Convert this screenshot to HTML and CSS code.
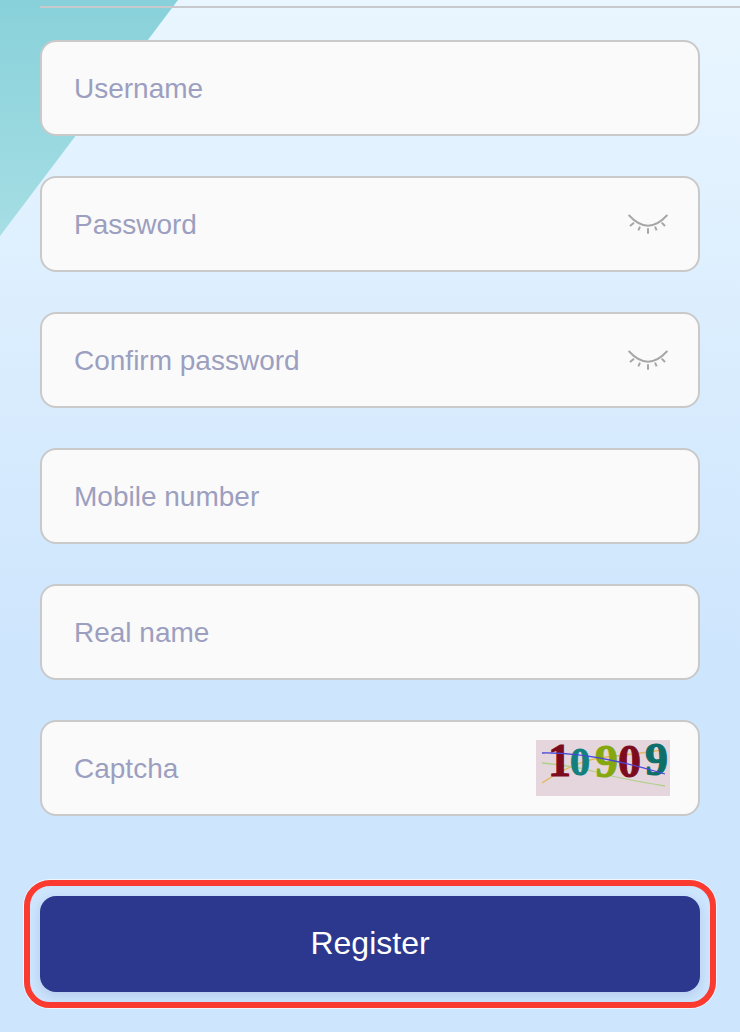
FILE: index.html
```html
<!DOCTYPE html>
<html lang="en">
<head>
    <meta charset="UTF-8">
    <meta name="viewport" content="width=device-width, initial-scale=1.0">
    <title>Register</title>
    <link rel="stylesheet" href="styles.css">
</head>
<body>

<div class="corner"></div>
<div class="top-line"></div>

<form class="register-form">
    <div class="field">
        <input type="text" placeholder="Username">
    </div>
    <div class="field">
        <input type="password" placeholder="Password">
        <svg class="eye" viewBox="0 0 120 66" width="40" height="22">
            <path d="M2 6Q60 70 118 6M6 39L18 29M31 52L36 41M60 62L60 46M86 52L81 41M111 39L101 29"/>
        </svg>
    </div>
    <div class="field">
        <input type="password" placeholder="Confirm password">
        <svg class="eye" viewBox="0 0 120 66" width="40" height="22">
            <path d="M2 6Q60 70 118 6M6 39L18 29M31 52L36 41M60 62L60 46M86 52L81 41M111 39L101 29"/>
        </svg>
    </div>
    <div class="field">
        <input type="text" placeholder="Mobile number">
    </div>
    <div class="field">
        <input type="text" placeholder="Real name">
    </div>
    <div class="field field-captcha">
        <input type="text" placeholder="Captcha">
        <svg class="captcha" viewBox="0 0 134 56" width="134" height="56">
            <path class="line-orange" d="M6 43Q40 20 70 17T126 10"/>
            <path class="line-green" d="M6 23Q40 26 60 32T129 46"/>
            <text class="digit big red" x="12" y="36">1</text>
            <text class="digit small teal" x="34" y="35">0</text>
            <text class="digit big green" x="59" y="37">9</text>
            <text class="digit big red" x="82" y="37">0</text>
            <text class="digit big dark-teal" x="109" y="35">9</text>
            <path class="line-blue" d="M6 13Q56 12 129 34"/>
        </svg>
    </div>
    <div class="submit-wrap">
        <button type="button" class="submit">Register</button>
    </div>
</form>

</body>
</html>
```

FILE: styles.css
```css
html, body {
    height: 100%;
}
body {
    margin: 0;
    height: 1032px;
    overflow: hidden;
    position: relative;
    font-family: "Liberation Sans", Arial, sans-serif;
    background: linear-gradient(180deg, #e9f6ff 0%, #cde5fd 65%, #cde5fd 100%);
}
.corner {
    position: absolute;
    left: 0;
    top: 0;
    width: 178px;
    height: 236px;
    background: linear-gradient(180deg, #88d1da 0%, #a6dee4 100%);
    clip-path: polygon(0 0, 100% 0, 0 100%);
}
.top-line {
    position: relative;
    height: 2px;
    margin: 6px 0 0 40px;
    background-color: #c8c9cd;
}
.register-form {
    position: relative;
    display: flex;
    flex-direction: column;
    gap: 40px;
    padding: 32px 40px 0;
}
.field {
    display: flex;
    align-items: center;
    box-sizing: border-box;
    height: 96px;
    padding: 0 30px 0 32px;
    background-color: #fafafa;
    border: 2px solid #c9c9c9;
    border-radius: 16px;
}
.field-captcha {
    padding-right: 28px;
}
.field input {
    flex: 1;
    min-width: 0;
    padding: 2px 0 0;
    border: none;
    outline: none;
    background: transparent;
    font-family: inherit;
    font-size: 28px;
    color: #333;
}
.field input::placeholder {
    color: #9c9fbf;
    opacity: 1;
}
.eye {
    flex: none;
}
.eye path {
    fill: none;
    stroke: #a6a6a6;
    stroke-width: 6;
}
.captcha {
    flex: none;
    overflow: visible;
    background-color: #e5d6de;
}
.digit {
    font-family: "Liberation Serif", "Times New Roman", serif;
    font-weight: bold;
    stroke-width: 1;
}
.big {
    font-size: 46px;
}
.small {
    font-size: 40px;
}
.red {
    fill: #7d0b1e;
    stroke: #7d0b1e;
}
.teal {
    fill: #11807f;
    stroke: #11807f;
}
.green {
    fill: #86a80e;
    stroke: #86a80e;
}
.dark-teal {
    fill: #0e6e68;
    stroke: #0e6e68;
}
.captcha path {
    fill: none;
    stroke-width: 1.3;
}
.line-orange {
    stroke: #e2b85c;
}
.line-green {
    stroke: #b3d08c;
}
.line-blue {
    stroke: #4a46d8;
}
.submit-wrap {
    margin: 24px -16px 0;
    padding: 10px;
    border: 6px solid #fb3a30;
    border-radius: 26px;
    box-shadow: 0 0 0 1px #eef7ff;
}
.submit {
    display: block;
    width: 100%;
    height: 96px;
    padding: 0 0 2px;
    border: none;
    border-radius: 16px;
    background-color: #2c388e;
    box-shadow: 0 4px 12px rgba(44, 56, 142, 0.15);
    color: #fff;
    font-family: inherit;
    font-size: 32px;
    cursor: pointer;
}
```
